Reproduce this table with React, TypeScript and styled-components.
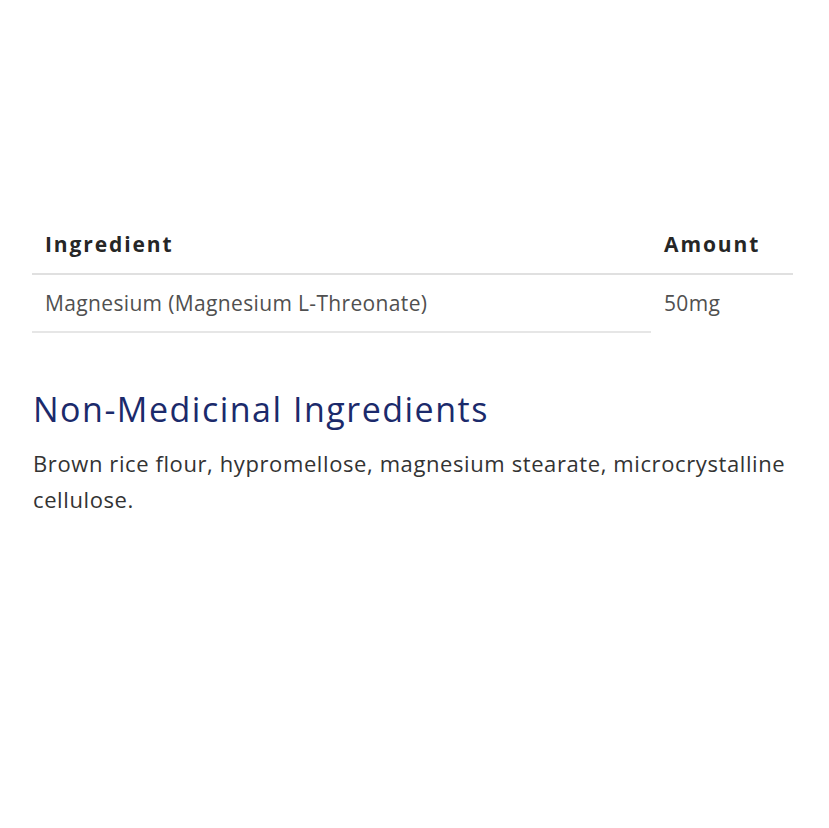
import * as React from 'react';
import styled, { createGlobalStyle } from 'styled-components';

const GlobalStyle = createGlobalStyle`
    body {
        margin: 0;
        background: #ffffff;
        font-family: "Open Sans", "Noto Sans", sans-serif;
    }
`;

const Page = styled.div`
    width: 829px;
    height: 828px;
    padding: 216px 0 0 32px;
    box-sizing: border-box;
`;

const Content = styled.div`
    width: 761px;
`;

const Table = styled.table`
    width: 100%;
    border-collapse: collapse;
    font-size: 21px;
    line-height: 30px;
`;

const HeadCell = styled.th`
    text-align: left;
    font-weight: 700;
    letter-spacing: 1.9px;
    color: #262626;
    padding: 13px 13px 14px;
    border-bottom: 2px solid #e0e0e0;
`;

type CellProps = {
    $bordered?: boolean;
    $width?: string;
}

const Cell = styled.td<CellProps>`
    color: #505050;
    letter-spacing: 0.35px;
    padding: 13px 13px 13px;
    width: ${({ $width }) => $width || 'auto'};
    border-bottom: 2px solid ${({ $bordered }) => $bordered ? '#e6e6e6' : 'transparent'};
`;

const Heading = styled.h2`
    margin: 57px 0 0 1px;
    font-size: 34px;
    line-height: 38px;
    letter-spacing: 1.5px;
    font-weight: 400;
    color: #1b2a6b;
`;

const Text = styled.p`
    margin: 17px 0 0 1px;
    font-size: 22px;
    line-height: 36px;
    letter-spacing: 0.6px;
    color: #333333;
`;

const App: React.FC = () => {
    return (
        <>
            <GlobalStyle />
            <Page>
                <Content>
                    <Table>
                        <thead>
                            <tr>
                                <HeadCell>Ingredient</HeadCell>
                                <HeadCell>Amount</HeadCell>
                            </tr>
                        </thead>
                        <tbody>
                            <tr>
                                <Cell $bordered $width="593px">Magnesium (Magnesium L-Threonate)</Cell>
                                <Cell>50mg</Cell>
                            </tr>
                        </tbody>
                    </Table>
                    <Heading>Non-Medicinal Ingredients</Heading>
                    <Text>Brown rice flour, hypromellose, magnesium stearate, microcrystalline cellulose.</Text>
                </Content>
            </Page>
        </>
    );
}

export default App;
